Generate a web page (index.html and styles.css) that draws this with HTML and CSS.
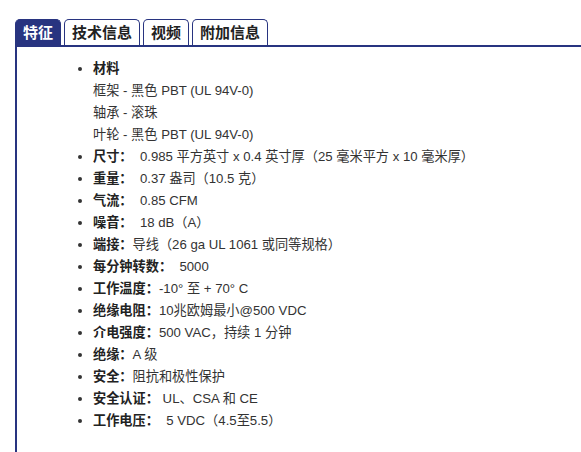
FILE: index.html
```html
<!DOCTYPE html>
<html lang="zh">
<head>
    <meta charset="UTF-8">
    <meta name="viewport" content="width=device-width, initial-scale=1.0">
    <title>产品信息</title>
    <link rel="stylesheet" href="styles.css">
</head>
<body>
    <div class="tabs">
        <ul class="tab-list">
            <li class="tab active">特征</li>
            <li class="tab">技术信息</li>
            <li class="tab">视频</li>
            <li class="tab">附加信息</li>
        </ul>
        <div class="tab-panel">
            <ul class="specs">
                <li>
                    <b>材料</b><br>
                    框架 - 黑色 PBT (UL 94V-0)<br>
                    轴承 - 滚珠<br>
                    叶轮 - 黑色 PBT (UL 94V-0)
                </li>
                <li><b>尺寸：</b>&nbsp; 0.985 平方英寸 x 0.4 英寸厚（25 毫米平方 x 10 毫米厚）</li>
                <li><b>重量：</b>&nbsp; 0.37 盎司（10.5 克）</li>
                <li><b>气流：</b>&nbsp; 0.85 CFM</li>
                <li><b>噪音：</b>&nbsp; 18 dB（A）</li>
                <li><b>端接：</b>导线（26 ga UL 1061 或同等规格）</li>
                <li><b>每分钟转数：</b>&nbsp; 5000</li>
                <li><b>工作温度：</b>-10° 至 + 70° C</li>
                <li><b>绝缘电阻：</b>10兆欧姆最小@500 VDC</li>
                <li><b>介电强度：</b>500 VAC，持续 1 分钟</li>
                <li><b>绝缘：</b>A 级</li>
                <li><b>安全：</b>阻抗和极性保护</li>
                <li><b>安全认证：</b>&nbsp;UL、CSA 和 CE</li>
                <li><b>工作电压：</b>&nbsp; 5 VDC（4.5至5.5）</li>
            </ul>
        </div>
    </div>
</body>
</html>
```

FILE: styles.css
```css
body {
    margin: 0;
    padding: 19px 0 0 15px;
    font-family: "Liberation Sans", Arial, "Noto Sans CJK SC", sans-serif;
    color: #333;
    background: #fff;
}
.tab-list {
    display: flex;
    gap: 3px;
    margin: 0;
    padding: 0;
    list-style: none;
    border-bottom: 2px solid #283480;
}
.tab {
    height: 25px;
    line-height: 25px;
    padding: 0 7px;
    border: 1px solid #283480;
    border-bottom: none;
    border-radius: 5px 5px 0 0;
    font-size: 15px;
    font-weight: bold;
    color: #222;
}
.tab.active {
    background: #283480;
    color: #fff;
}
.tab-panel {
    border-left: 2px solid #283480;
    padding: 11px 0 20px 37px;
    min-height: 380px;
}
.specs {
    margin: 0;
    padding-left: 39px;
    font-size: 13.2px;
    line-height: 22px;
}
.specs b {
    color: #222;
}
```
